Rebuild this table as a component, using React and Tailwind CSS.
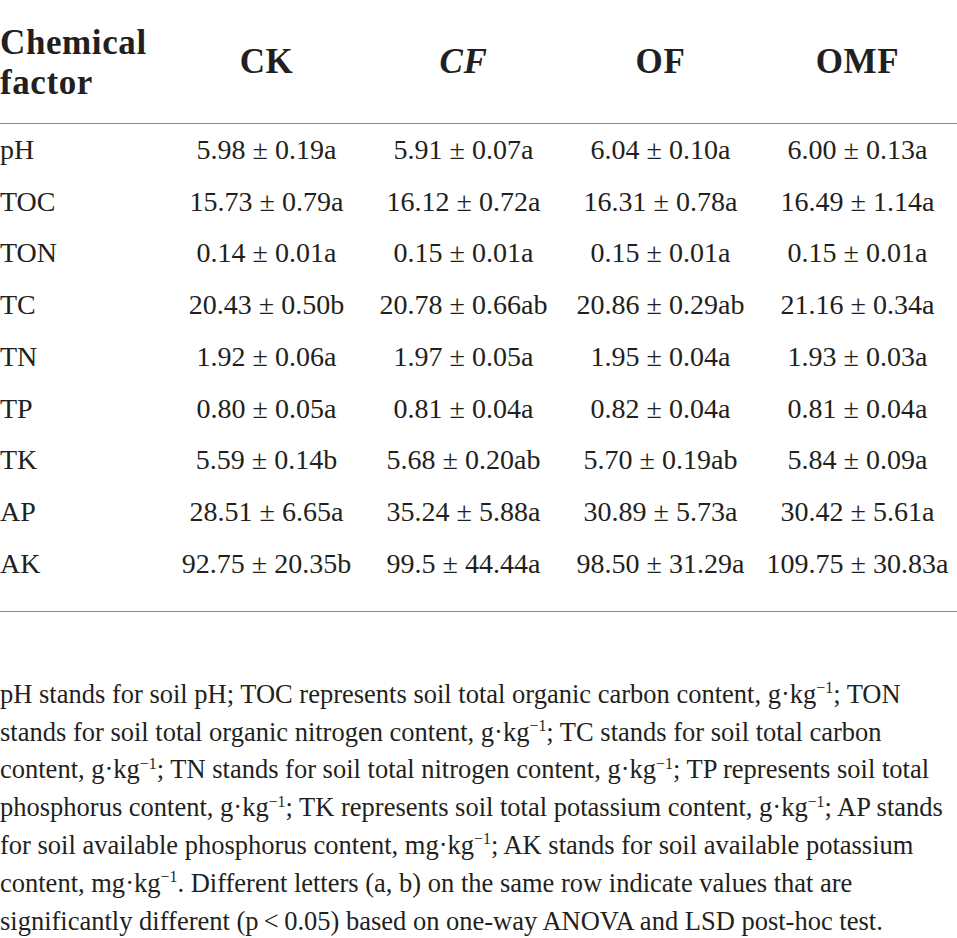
import React from "react";

const ROWS = [
  ["pH", "5.98 ± 0.19a", "5.91 ± 0.07a", "6.04 ± 0.10a", "6.00 ± 0.13a"],
  ["TOC", "15.73 ± 0.79a", "16.12 ± 0.72a", "16.31 ± 0.78a", "16.49 ± 1.14a"],
  ["TON", "0.14 ± 0.01a", "0.15 ± 0.01a", "0.15 ± 0.01a", "0.15 ± 0.01a"],
  ["TC", "20.43 ± 0.50b", "20.78 ± 0.66ab", "20.86 ± 0.29ab", "21.16 ± 0.34a"],
  ["TN", "1.92 ± 0.06a", "1.97 ± 0.05a", "1.95 ± 0.04a", "1.93 ± 0.03a"],
  ["TP", "0.80 ± 0.05a", "0.81 ± 0.04a", "0.82 ± 0.04a", "0.81 ± 0.04a"],
  ["TK", "5.59 ± 0.14b", "5.68 ± 0.20ab", "5.70 ± 0.19ab", "5.84 ± 0.09a"],
  ["AP", "28.51 ± 6.65a", "35.24 ± 5.88a", "30.89 ± 5.73a", "30.42 ± 5.61a"],
  ["AK", "92.75 ± 20.35b", "99.5 ± 44.44a", "98.50 ± 31.29a", "109.75 ± 30.83a"],
];

const Unit = ({ u }) => (
  <>
    {u}·kg<sup className="text-[0.6em] relative -top-[0.6em]">−1</sup>
  </>
);

export default function App() {
  return (
    <div
      className="w-[957px] min-h-[938px] bg-white text-[#231f20]"
      style={{ fontFamily: '"Liberation Serif", "Times New Roman", serif' }}
    >
      <div className="grid grid-cols-[168px_repeat(4,197px)] h-[123px] items-center font-bold text-[35px] leading-[40px] tracking-[0.6px]">
        <div className="pt-[2px]">
          Chemical
          <br />
          factor
        </div>
        <div className="text-center">CK</div>
        <div className="text-center italic">CF</div>
        <div className="text-center">OF</div>
        <div className="text-center">OMF</div>
      </div>
      <div className="h-px bg-[#8c8c8c]" />
      <div className="pb-[21px] text-[28px]">
        {ROWS.map((r) => (
          <div
            key={r[0]}
            className="grid grid-cols-[168px_repeat(4,197px)] h-[51.75px] items-center"
          >
            <div>{r[0]}</div>
            {r.slice(1).map((v, i) => (
              <div key={i} className="text-center whitespace-nowrap">
                {v}
              </div>
            ))}
          </div>
        ))}
      </div>
      <div className="h-px bg-[#8c8c8c]" />
      <div className="pt-[64px] text-[26.5px] leading-[37.8px] whitespace-nowrap">
        <div>
          pH stands for soil pH; TOC represents soil total organic carbon content, <Unit u="g" />; TON
        </div>
        <div>
          stands for soil total organic nitrogen content, <Unit u="g" />; TC stands for soil total carbon
        </div>
        <div>
          content, <Unit u="g" />; TN stands for soil total nitrogen content, <Unit u="g" />; TP represents soil total
        </div>
        <div>
          phosphorus content, <Unit u="g" />; TK represents soil total potassium content, <Unit u="g" />; AP stands
        </div>
        <div>
          for soil available phosphorus content, <Unit u="mg" />; AK stands for soil available potassium
        </div>
        <div>
          content, <Unit u="mg" />. Different letters (a, b) on the same row indicate values that are
        </div>
        <div>
          significantly different (p{"\u2009"}&lt;{"\u2009"}0.05) based on one-way ANOVA and LSD post-hoc test.
        </div>
      </div>
    </div>
  );
}
